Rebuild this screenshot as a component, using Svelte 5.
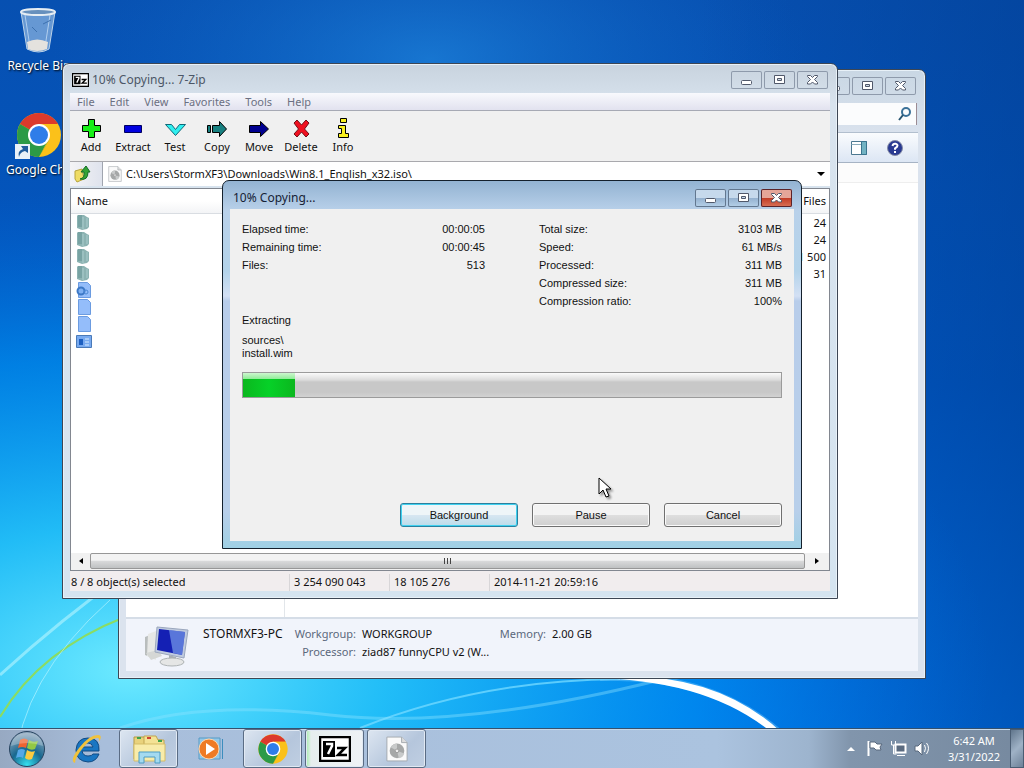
<script lang="ts">
	type IconName = 'folder' | 'setup' | 'file' | 'exe';

	const menus = ['File', 'Edit', 'View', 'Favorites', 'Tools', 'Help'];
	const tools = ['Add', 'Extract', 'Test', 'Copy', 'Move', 'Delete', 'Info'];

	const entries: { icon: IconName; files: string }[] = [
		{ icon: 'folder', files: '24' },
		{ icon: 'folder', files: '24' },
		{ icon: 'folder', files: '1 500' },
		{ icon: 'folder', files: '31' },
		{ icon: 'setup', files: '' },
		{ icon: 'file', files: '' },
		{ icon: 'file', files: '' },
		{ icon: 'exe', files: '' }
	];

	const timing = [
		['Elapsed time:', '00:00:05'],
		['Remaining time:', '00:00:45'],
		['Files:', '513']
	];

	const sizes = [
		['Total size:', '3103 MB'],
		['Speed:', '61 MB/s'],
		['Processed:', '311 MB'],
		['Compressed size:', '311 MB'],
		['Compression ratio:', '100%']
	];

	let path = $state('C:\\Users\\StormXF3\\Downloads\\Win8.1_English_x32.iso\\');
	let search = $state('');
	let progress = $state(9.7);
</script>

{#snippet caption()}
	<div class="caption">
		<button aria-label="Minimize">
			<svg width="31" height="18" viewBox="0 0 31 18"
				><rect x="10.5" y="9.5" width="10" height="4" rx="1" fill="#fff" stroke="#50586a" /></svg
			>
		</button>
		<button aria-label="Maximize">
			<svg width="31" height="18" viewBox="0 0 31 18"
				><path
					d="M10.5 4.5h10v8h-10zM13.5 7.5v2h4v-2z"
					fill="#fff"
					fill-rule="evenodd"
					stroke="#50586a"
				/></svg
			>
		</button>
		<button class="close" aria-label="Close">
			<svg width="31" height="18" viewBox="0 0 31 18"
				><path
					d="M10.5 4.5h3l2 2 2-2h3v1l-3 3 3 3v1.500h-3l-2-2-2 2h-3v-1.500l3-3-3-3z"
					fill="#fff"
					stroke="#50586a"
				/></svg
			>
		</button>
	</div>
{/snippet}

{#snippet sevenZip(width: number, height: number)}
	<svg {width} {height} viewBox="0 0 32 26" aria-hidden="true">
		<rect x="1" y="1" width="30" height="24" fill="#fff" stroke="#000" stroke-width="2.5" />
		<rect x="4" y="5" width="12" height="16" />
		<path d="M7 8h6v2l-4 8" fill="none" stroke="#fff" stroke-width="2.5" />
		<path d="M18 12h8l-7 7h9" fill="none" stroke="#000" stroke-width="2.5" />
	</svg>
{/snippet}

{#snippet chrome(size: number)}
	<svg width={size} height={size} viewBox="0 0 48 48" aria-hidden="true">
		<circle cx="24" cy="24" r="22" fill="#fbc11a" />
		<path d="M24 24 5 13A22 22 0 0 1 43 13H24z" fill="#dc3a2c" />
		<path d="M5 13A22 22 0 0 0 24 46l10-17-10-5z" fill="#2c9a47" />
		<path d="M24 13h19L34 29 24 46l9-17z" fill="#fbc11a" />
		<circle cx="24" cy="24" r="11" fill="#fff" />
		<circle cx="24" cy="24" r="9" fill="#2f7de9" />
	</svg>
{/snippet}

{#snippet disc(width: number, height: number)}
	<svg {width} {height} viewBox="0 0 24 28" aria-hidden="true">
		<path d="M1 1h16l6 6v20H1z" fill="#fafafa" stroke="#a2a7ad" />
		<path d="M17 1v6h6" fill="#ddd" stroke="#a2a7ad" />
		<circle cx="12" cy="16" r="8" fill="#a6a8a8" />
		<path d="m12 16-7-4q3-4 7-4zM12 16l8 3q-2 5-6 5z" fill="#c8caca" />
		<circle cx="12" cy="16" r="2" fill="#eee" stroke="#999" />
	</svg>
{/snippet}

{#snippet toolIcon(name: string)}
	<svg width="22" height="22" viewBox="0 0 22 22" stroke="#000" aria-hidden="true">
		{#if name === 'Add'}
			<path d="M8.500 2.500h6v6h6v6h-6v6h-6v-6h-6v-6h6z" fill="#18f018" />
		{:else if name === 'Extract'}
			<path d="M2.500 8.500h17v7h-17z" fill="#0000e0" stroke="#000060" />
		{:else if name === 'Test'}
			<path d="M1.500 7.500h6l4 5 4-5h6l-10 11z" fill="#30f0f0" stroke="#106878" />
		{:else if name === 'Copy'}
			<path d="M1.500 8.500h3v7h-3zM6.500 8.500h7v-4l7 7.500-7 7.500v-4h-7z" fill="#188080" />
		{:else if name === 'Move'}
			<path d="M1.500 8.500h11v-4l8 7.500-8 7.500v-4h-11z" fill="#000090" />
		{:else if name === 'Delete'}
			<path
				d="m4 6 3-3 4.500 5L16 3l3 3-4.500 6 4.500 5-3 3-4.500-5L7 20l-3-3 4.500-5z"
				fill="#f01020"
				stroke="#701018"
			/>
		{:else}
			<path d="M8.500 1.500h6v4h-6zM6.500 8.500h7v8h3v4h-10v-4h3v-5h-3z" fill="#f8f020" />
		{/if}
	</svg>
{/snippet}

{#snippet fileIcon(name: IconName)}
	<svg width="16" height="16" viewBox="0 0 16 16" aria-hidden="true">
		{#if name === 'folder'}
			<path d="M1 2q0-1 2-1h5l3 2 2 1v9l-2 2-5 1-5-2z" fill="#8cb3b2" />
			<path d="M2 1h4v12H2z" fill="#78a3a3" />
			<path d="M7 3v12M11 4v9" stroke="#aacdce" />
		{:else if name === 'exe'}
			<path d="M.5 2.500h15v12H.500z" fill="#78aaf0" stroke="#4a7ab8" />
			<path d="M3 6h4v6H3z" fill="#1d5fc0" />
			<path d="M9 6h4M9 9h4M9 12h4" stroke="#d8ecff" />
		{:else}
			<path d="M2.500.5h9l3 3v12h-12z" fill="#94bdfa" stroke="#6b9be0" />
			{#if name === 'setup'}
				<circle cx="5" cy="9" r="3.500" fill="#7fb0f2" stroke="#3c78c6" stroke-width="2" />
				<circle cx="10" cy="10" r="2" fill="none" stroke="#4b88d4" />
			{/if}
		{/if}
	</svg>
{/snippet}

<div class="screen">
	<svg class="wallpaper" viewBox="0 0 1024 768" preserveAspectRatio="none" aria-hidden="true">
		<defs>
			<radialGradient id="glow">
				<stop offset="0" stop-color="#6deaff" />
				<stop offset="0.3" stop-color="#25c6fa" stop-opacity="0.9" />
				<stop offset="0.65" stop-color="#0095f4" stop-opacity="0.65" />
				<stop offset="1" stop-color="#0070e0" stop-opacity="0" />
			</radialGradient>
			<linearGradient id="sky" x1="0" y1="0" x2="0" y2="1">
				<stop offset="0" stop-color="#0750b1" />
				<stop offset="0.5" stop-color="#0058c4" />
				<stop offset="1" stop-color="#0074ea" />
			</linearGradient>
			<radialGradient id="light">
				<stop offset="0" stop-color="#238ee4" stop-opacity="0.6" />
				<stop offset="1" stop-color="#1068c8" stop-opacity="0" />
			</radialGradient>
			<linearGradient id="shade">
				<stop offset="0" stop-color="#003c90" stop-opacity="0" />
				<stop offset="1" stop-color="#003c90" stop-opacity="0.5" />
			</linearGradient>
		</defs>
		<rect width="1024" height="768" fill="url(#sky)" />
		<ellipse cx="430" cy="60" rx="380" ry="190" fill="url(#light)" />
		<rect x="700" width="324" height="768" fill="url(#shade)" />
		<ellipse cx="130" cy="670" rx="860" ry="480" fill="url(#glow)" />
		<g fill="none">
			<path d="M0 675Q60 620 130 570" stroke="#b7f5ff" stroke-width="3" opacity="0.6" />
			<path d="M0 717Q40 650 125 617" stroke="#8bdc62" stroke-width="2" />
			<path d="M15 768Q20 680 110 600" stroke="#c1f7ff" opacity="0.6" />
			<path d="M360 728Q480 680 620 679" stroke="#70d8ff" stroke-width="2" opacity="0.8" />
			<path d="M120 728Q200 700 330 715T660 680" stroke="#8fe4ff" stroke-width="3" opacity="0.4" />
			<path d="M600 677Q710 674 778 732" stroke="#7ccfff" stroke-width="8" opacity="0.4" />
		</g>
		<path d="M590 678Q710 666 781 732h-10Q706 679 590 678" fill="#fff" />
	</svg>

	<main class="desktop">
		<div class="shortcuts">
			<button class="shortcut">
				<svg width="48" height="48" viewBox="0 0 48 48" aria-hidden="true">
					<path d="m6 5 6 37q12 6 22 0l6-37z" fill="#a6c8ea" fill-opacity="0.6" stroke="#bdd3e8" />
					<path d="M10 8l5 32M35 8l-5 32" stroke="#e4f3ff" opacity="0.6" />
					<path d="m12 35q10-5 21 0l-1 7q-10 4-19 0z" fill="#e4e2de" />
					<path d="M28 17l8-4M17 20l5 5" stroke="#3d71af" />
					<ellipse cx="23" cy="5" rx="17" ry="3" fill="#6790bd" stroke="#e6edf3" stroke-width="2" />
				</svg>
				<span>Recycle Bin</span>
			</button>
			<button class="shortcut">
				<span class="linked">
					{@render chrome(48)}
					<svg class="link-arrow" width="15" height="15" viewBox="0 0 15 15">
						<path d="M0 0h15v15H0z" fill="#e9f1f8" />
						<path d="M4 13q-2-6 4-8L6 2h7v7l-3-2q-5 1-6 6" fill="#205c9c" />
					</svg>
				</span>
				<span>Google Chrome</span>
			</button>
		</div>

		<section class="window computer" aria-label="Computer">
			<header class="titlebar">{@render caption()}</header>
			<div class="searchbar">
				<label class="search">
					<input aria-label="Search Computer" bind:value={search} />
					<svg width="14" height="14" viewBox="0 0 14 14" fill="none" aria-hidden="true">
						<circle cx="8" cy="5" r="4" stroke="#3a7198" stroke-width="2" />
						<path d="M5 8 1 13" stroke="#26536f" stroke-width="2" />
					</svg>
				</label>
			</div>
			<div class="commandbar">
				<button aria-label="Show the preview pane">
					<svg width="16" height="14" viewBox="0 0 16 14">
						<path d="M.5.5h15v13H.5z" fill="#fff" stroke="#4c7890" />
						<path d="M.5 3.500h10" stroke="#8cacbb" />
						<path d="M10.500.5h5v13h-5z" fill="#72b3c3" stroke="#39748e" />
					</svg>
				</button>
				<button aria-label="Help">
					<svg width="16" height="16" viewBox="0 0 16 16">
						<circle cx="8" cy="8" r="7.500" fill="#293a91" stroke="#868da8" />
						<path
							d="M5.500 6Q6 3.500 8.500 3.800q3 .7 1.500 3L8 8.500v1.300M8 11v2"
							fill="none"
							stroke="#fff"
							stroke-width="2"
						/>
					</svg>
				</button>
			</div>
			<div class="drives"><div class="tree"></div></div>
			<footer class="details">
				<svg width="48" height="44" viewBox="0 0 48 44" aria-hidden="true">
					<path d="m2 12 10-4v26l-10-4z" fill="#b9bdbd" />
					<path d="m5 9 8-3v29l-9-4z" fill="#e7e8e6" />
					<path d="m3 28 12-3 4 6-11 4z" fill="#d5d7d5" />
					<path d="m14 2 31 3-4 28-29-6z" fill="#c0cbdf" stroke="#9ba7bd" />
					<path d="m16 4 26 3-3 23-25-5z" fill="#1420b4" />
					<path d="m26 5 16 2-3 23-9-2z" fill="#7ea4ee" opacity="0.65" />
					<path d="m26 30 7 2v6h-7z" fill="#a9afb4" />
					<ellipse cx="29" cy="37" rx="12" ry="4" fill="#e5e6e5" stroke="#aeb3b4" />
				</svg>
				<strong>STORMXF3-PC</strong>
				<dl class="properties">
					<dt>Workgroup:</dt>
					<dd>WORKGROUP</dd>
					<dt>Processor:</dt>
					<dd>ziad87 funnyCPU v2 (W...</dd>
				</dl>
				<dl class="properties memory">
					<dt>Memory:</dt>
					<dd>2.00 GB</dd>
				</dl>
			</footer>
		</section>

		<section class="window archiver" aria-label="7-Zip">
			<header class="titlebar">
				{@render sevenZip(17, 14)}
				<h1>10% Copying... 7-Zip</h1>
				{@render caption()}
			</header>
			<nav class="menubar">
				{#each menus as menu}
					<button>{menu}</button>
				{/each}
			</nav>
			<div class="toolbar">
				{#each tools as tool}
					<button>
						{@render toolIcon(tool)}
						<span>{tool}</span>
					</button>
				{/each}
			</div>
			<div class="addressbar">
				<button class="up" aria-label="Up one level">
					<svg width="18" height="18" viewBox="0 0 18 18">
						<path d="m1 6 7-2 2 10-7 3-2-3z" fill="#efdc65" stroke="#b7a43c" />
						<path d="M6 14q5-1 4-7H7l5-6 4 6h-2q0 9-8 7" fill="#33a336" stroke="#146d24" />
					</svg>
				</button>
				<div class="path">
					{@render disc(14, 16)}
					<input aria-label="Path" bind:value={path} />
					<button aria-label="Show path list">
						<svg width="8" height="5" viewBox="0 0 8 5"><path d="M0 0h8L4 4z" /></svg>
					</button>
				</div>
			</div>
			<div class="listing">
				<table>
					<thead>
						<tr><th>Name</th><th>Files</th></tr>
					</thead>
					<tbody>
						{#each entries as entry}
							<tr>
								<td>{@render fileIcon(entry.icon)}</td>
								<td>{entry.files}</td>
							</tr>
						{/each}
					</tbody>
				</table>
				<div class="scrollbar">
					<button aria-label="Scroll left">
						<svg width="4" height="6" viewBox="0 0 4 6"><path d="M4 0v6L0 3z" /></svg>
					</button>
					<div class="thumb"><i></i><i></i><i></i></div>
					<button aria-label="Scroll right">
						<svg width="4" height="6" viewBox="0 0 4 6"><path d="M0 0v6l4-3z" /></svg>
					</button>
				</div>
			</div>
			<footer class="statusbar">
				<span>8 / 8 object(s) selected</span>
				<span>3 254 090 043</span>
				<span>18 105 276</span>
				<span>2014-11-21 20:59:16</span>
			</footer>
		</section>

		<div class="window dialog" role="dialog" aria-label="10% Copying...">
			<header class="titlebar">
				<h2>10% Copying...</h2>
				{@render caption()}
			</header>
			<div class="dialog-body">
				<div class="stats">
					<dl>
						{#each timing as [label, value]}
							<div><dt>{label}</dt><dd>{value}</dd></div>
						{/each}
					</dl>
					<dl>
						{#each sizes as [label, value]}
							<div><dt>{label}</dt><dd>{value}</dd></div>
						{/each}
					</dl>
				</div>
				<p class="action">Extracting</p>
				<p class="current">sources\<br />install.wim</p>
				<progress max="100" value={progress} aria-label="Copying"></progress>
				<div class="actions">
					<button class="default">Background</button>
					<button>Pause</button>
					<button>Cancel</button>
				</div>
			</div>
		</div>

		<svg class="cursor" width="14" height="22" viewBox="0 0 14 22" aria-hidden="true">
			<path d="M1 1v16l4-4 3 7 3-1-3-7h5z" fill="#fff" stroke="#000" />
		</svg>
	</main>

	<footer class="taskbar">
		<button class="start" aria-label="Start">
			<svg width="38" height="38" viewBox="0 0 38 38">
				<defs>
					<radialGradient id="orb" cx="0.5" cy="0.95" r="0.9">
						<stop offset="0" stop-color="#35e0ef" />
						<stop offset="0.5" stop-color="#18688f" />
						<stop offset="1" stop-color="#8ca6bd" />
					</radialGradient>
				</defs>
				<circle cx="19" cy="19" r="17.5" fill="url(#orb)" stroke="#27435f" />
				<path d="M12 10q4-3 8 0l-2 8q-4-2-8 0z" fill="#ee6331" />
				<path d="M21 10q4 3 9 1l-3 8q-4 2-8-1z" fill="#92c845" />
				<path d="M10 20q4-2 7 0l-2 8q-3-2-7 0z" fill="#55a8e8" />
				<path d="M19 20q4 3 8 1l-3 8q-4 2-7-1z" fill="#fbcb40" />
				<path d="M3 16Q5 3 19 3t16 13Q19 10 3 16" fill="#fff" opacity="0.25" />
			</svg>
		</button>
		<button class="task" aria-label="Internet Explorer">
			<svg width="34" height="34" viewBox="0 0 34 34">
				<path
					d="M29 19H12q1 5 6 5 4 0 5-2h6q-3 8-11 8Q6 29 6 18 7 6 18 6q12 0 11 13M12 15h11q-1-4-5-4-5 0-6 4"
					fill="#1976c2"
					stroke="#104a83"
				/>
				<path d="M5 31q-6-2 4-15T28 3q5 0 1 7 1-5-3-4-7 2-14 11T5 31" fill="#f1c23b" />
			</svg>
		</button>
		<button class="task open" aria-label="Windows Explorer">
			<svg width="34" height="32" viewBox="0 0 34 32">
				<path d="M2 4h10l2 3h16v19H2z" fill="#e9d27c" stroke="#b59a45" />
				<path d="M12 3h12l2 4h6v18H12z" fill="#f4e294" stroke="#c0a550" />
				<path d="M2 11h31v17H2z" fill="#f8ecaa" stroke="#d5bd67" />
				<path d="M5 5h4M26 8h4" stroke="#3fa34a" stroke-width="2" />
				<path d="M15 5h4" stroke="#cf4433" stroke-width="2" />
				<path d="M7 30V19h21v11h-5v-6H12v6z" fill="#a4daf0" stroke="#4c9cc4" />
			</svg>
		</button>
		<button class="task" aria-label="Windows Media Player">
			<svg width="28" height="28" viewBox="0 0 28 28">
				<path d="M2 3h21v21H2z" fill="#94c8e8" stroke="#579ac4" />
				<path d="M25.500 4v20" stroke="#3c8dbd" />
				<circle cx="12" cy="14" r="10" fill="#ee7b25" stroke="#ffd7ad" />
				<path d="m9 8 9 6-9 6z" fill="#fff" />
			</svg>
		</button>
		<button class="task open" aria-label="Google Chrome">{@render chrome(32)}</button>
		<button class="task open busy" aria-label="7-Zip">{@render sevenZip(32, 26)}</button>
		<button class="task open" aria-label="Disc image">{@render disc(22, 26)}</button>

		<div class="tray">
			<div class="tray-icons">
				<button aria-label="Show hidden icons">
					<svg width="8" height="5" viewBox="0 0 8 5"><path d="M0 5l4-4 4 4z" fill="#fff" /></svg>
				</button>
				<button aria-label="Action Center">
					<svg width="17" height="17" viewBox="0 0 17 17">
						<path d="M2.500 1v15" stroke="#fff" stroke-width="2" />
						<path d="M4 2h5l2 2h5l-2 3 1 3h-5L8 8H4z" fill="#fff" stroke="#59687d" />
					</svg>
				</button>
				<button aria-label="Network">
					<svg width="17" height="17" viewBox="0 0 17 17" fill="none" stroke="#fff">
						<path d="M5.500 4.500h10v8h-10z" fill="#5b6b80" stroke-width="2" />
						<path d="M7 15.500h8M1.500 1v4h4V1M3.500 5v9h3" />
					</svg>
				</button>
				<button aria-label="Volume">
					<svg width="17" height="17" viewBox="0 0 17 17" fill="none" stroke="#fff">
						<path d="M1 6h3l4-4v13l-4-4H1z" fill="#fff" stroke="#59687d" />
						<path d="M10.500 5q2 3 0 7M12.500 3q4 5 0 11" />
					</svg>
				</button>
			</div>
			<time datetime="2022-03-31T06:42"><span>6:42 AM</span><span>3/31/2022</span></time>
			<button class="show-desktop" aria-label="Show desktop"></button>
		</div>
	</footer>
</div>

<style>
	:global(body) {
		margin: 0;
	}

	.screen {
		position: relative;
		display: flex;
		flex-direction: column;
		height: 100vh;
		overflow: hidden;
		font-family: 'Noto Sans', 'Open Sans', sans-serif;
		font-size: 11px;
		line-height: 16px;
		color: #111;
	}

	.screen * {
		box-sizing: border-box;
	}

	button,
	input {
		padding: 0;
		border: none;
		background: none;
		font: inherit;
		color: inherit;
	}

	svg {
		display: block;
		flex-shrink: 0;
	}

	dl,
	dd,
	p,
	h1,
	h2 {
		margin: 0;
		font-size: inherit;
		font-weight: normal;
	}

	.wallpaper {
		position: absolute;
		inset: 0;
		width: 100%;
		height: 100%;
	}

	.desktop {
		position: relative;
		flex: 1;
		min-height: 0;
	}

	/* Desktop shortcuts */
	.shortcuts {
		display: flex;
		flex-direction: column;
		gap: 37px;
		width: 78px;
		padding-top: 7px;
	}

	.shortcut {
		display: flex;
		flex-direction: column;
		align-items: center;
		gap: 3px;
		color: #fff;
		font-size: 12px;
		text-shadow: 1px 1px 2px #000;
		white-space: nowrap;
	}

	.shortcut > span:last-child {
		max-width: 66px;
	}

	.linked {
		position: relative;
	}

	.link-arrow {
		position: absolute;
		left: 0;
		bottom: 0;
	}

	/* Windows */
	.window {
		position: absolute;
		display: flex;
		flex-direction: column;
		padding: 0 7px 7px;
		border: 1px solid #3d4654;
		border-radius: 7px 7px 0 0;
		background: #d5e1ec;
		box-shadow: inset 0 0 0 1px #e8f1f8;
	}

	.titlebar {
		display: flex;
		align-items: center;
		gap: 3px;
		flex-shrink: 0;
		height: 29px;
		padding: 3px 2px 0 2px;
		font-size: 12px;
	}

	.caption {
		display: flex;
		gap: 2px;
		margin-left: auto;
	}

	.caption button {
		width: 31px;
		height: 18px;
		border-radius: 2px;
		box-shadow: inset 0 0 0 1px #8e9aab;
	}

	/* Computer */
	.computer {
		inset: 69px 98px 49px 118px;
		background: linear-gradient(#c9d7e4, #dbe3ee 70px);
	}

	.searchbar {
		display: flex;
		justify-content: flex-end;
		padding: 4px 1px 7px 0;
	}

	.search {
		display: flex;
		align-items: center;
		width: 180px;
		height: 22px;
		padding-right: 4px;
		border-right: 1px solid #9b8b93;
		background: #fbfcfd;
	}

	.search input {
		flex: 1;
		min-width: 0;
		outline: none;
	}

	.commandbar {
		display: flex;
		align-items: center;
		justify-content: flex-end;
		gap: 20px;
		height: 31px;
		padding-right: 15px;
		border-top: 1px solid #b2bfce;
		border-bottom: 1px solid #a6b3c4;
		background: linear-gradient(#fafcfe, #dce6f4);
	}

	.drives {
		display: flex;
		flex: 1;
		background: linear-gradient(#fcfcfc 19px, #eee 19px, #eee 20px, #fff 20px);
	}

	.tree {
		width: 159px;
		border-right: 1px solid #e2e6ea;
	}

	.details {
		display: flex;
		align-items: flex-start;
		height: 54px;
		padding: 6px 14px 0 17px;
		border-top: 2px solid #d5dde7;
		background: #f1f4fb;
		line-height: 18px;
		white-space: nowrap;
	}

	.details strong {
		width: 85px;
		margin-left: 12px;
		font-size: 12px;
		font-weight: normal;
	}

	.properties {
		display: grid;
		grid-template-columns: 68px 137px;
		column-gap: 6px;
	}

	.properties dt {
		text-align: right;
		color: #5b687c;
	}

	.memory {
		grid-template-columns: 47px auto;
	}

	/* 7-Zip */
	.archiver {
		inset: 63px 186px 129px 62px;
		background: linear-gradient(#c8d3de, #d8e3ee 40px, #d5e4f0);
	}

	.archiver h1 {
		color: #4c5767;
	}

	.menubar {
		display: flex;
		gap: 15px;
		height: 18px;
		padding-left: 7px;
		border-bottom: 1px solid #a6a9b4;
		background: linear-gradient(#f8f9fd, #e2e2ef);
		color: #6c7082;
	}

	.toolbar {
		display: flex;
		height: 51px;
		padding-top: 6px;
		border-bottom: 1px solid #a9a9ad;
		background: #f0f0f0;
	}

	.toolbar button {
		display: flex;
		flex-direction: column;
		align-items: center;
		width: 42px;
	}

	.addressbar {
		display: flex;
		height: 24px;
		background: #fff;
	}

	.up {
		width: 33px;
		padding-left: 4px;
		border-right: 1px solid #a0a5af;
		background: linear-gradient(90deg, #f4f4f6, #dfe3ed);
	}

	.path {
		display: flex;
		align-items: center;
		gap: 4px;
		flex: 1;
		padding: 0 5px;
	}

	.path input {
		flex: 1;
		min-width: 0;
		outline: none;
	}

	.listing {
		display: flex;
		flex-direction: column;
		flex: 1;
		min-height: 0;
		margin-top: 2px;
		border: 1px solid #828790;
		background: #fff;
	}

	table {
		width: 100%;
		border-collapse: collapse;
		line-height: 17px;
	}

	th {
		height: 24px;
		padding: 0 3px 0 6px;
		border-bottom: 1px solid #d9dde2;
		background: linear-gradient(#fff 50%, #f3f4f6);
		font-weight: normal;
		text-align: left;
	}

	td {
		height: 17px;
		padding: 0 3px 0 5px;
	}

	th:last-child,
	td:last-child {
		text-align: right;
	}

	.scrollbar {
		display: flex;
		height: 17px;
		margin-top: auto;
		padding-bottom: 1px;
		background: #f1f1f1;
	}

	.scrollbar button {
		display: grid;
		place-items: center;
		width: 19px;
	}

	.scrollbar button:last-child {
		width: 24px;
	}

	.thumb {
		display: flex;
		justify-content: center;
		gap: 2px;
		flex: 1;
		padding-top: 4px;
		border: 1px solid #979797;
		border-radius: 2px;
		background: linear-gradient(#f3f3f3 45%, #d9dadb 50%, #bfc1c2);
	}

	.thumb i {
		width: 1px;
		height: 6px;
		background: #444;
	}

	.statusbar {
		display: grid;
		grid-template-columns: 219px 100px 100px 1fr;
		height: 20px;
		padding-top: 3px;
		background: #f1edee;
		white-space: nowrap;
	}

	.statusbar span {
		padding-left: 4px;
		border-left: 1px solid #d8d6d8;
	}

	.statusbar span:first-child {
		padding-left: 1px;
		border: none;
	}

	/* Copy progress */
	.dialog {
		inset: 180px 222px 179px 222px;
		border-color: #14202c;
		background: linear-gradient(
			#93b3d2,
			#b9d1ea 30px,
			#b3d3ea 90px,
			#d3e0f4 115px,
			#b8cdea 120px,
			#b8cfea 90%,
			#9fd0e4
		);
		box-shadow: none;
	}

	.dialog .titlebar {
		height: 28px;
		padding: 6px 2px 0 3px;
		color: #162235;
	}

	.dialog .caption button {
		background: linear-gradient(#c6d9ec 50%, #94b1cf 50%, #b6d1e9);
		box-shadow: inset 0 0 0 1px #62778f;
	}

	.dialog .caption .close {
		background: linear-gradient(#e5a598 50%, #c13a25 50%, #d97459);
		box-shadow: inset 0 0 0 1px #5b2329;
	}

	.dialog-body {
		display: flex;
		flex-direction: column;
		flex: 1;
		padding: 11px 12px 14px 12px;
		background: #f0f0f0;
		font-family: 'Liberation Sans', Arial, sans-serif;
	}

	.stats {
		display: grid;
		grid-template-columns: 1fr 1fr;
		gap: 54px;
		line-height: 18px;
	}

	.stats div {
		display: flex;
		justify-content: space-between;
	}

	.action {
		margin-top: 2px;
	}

	.current {
		margin-top: 6px;
		line-height: 13px;
	}

	progress {
		appearance: none;
		width: 100%;
		height: 26px;
		margin-top: 12px;
		border: 1px solid #9b9b9b;
	}

	progress::-webkit-progress-bar {
		background: linear-gradient(#fafafa, #dcdcdc 7px, #c8c8c8 9px, #c8c8c8 80%, #d2d2d2);
	}

	progress::-webkit-progress-value {
		background:
			linear-gradient(#cdf7cf, #90ec98 6px, transparent 6px),
			linear-gradient(90deg, #0bb71e, #06d128 50%, #0bb71e);
	}

	.actions {
		display: flex;
		justify-content: flex-end;
		gap: 14px;
		margin-top: auto;
	}

	.actions button {
		width: 118px;
		height: 24px;
		border: 1px solid #707070;
		border-radius: 3px;
		background: linear-gradient(#f3f3f3 48%, #dedede 52%, #cfcfcf);
		box-shadow: inset 0 0 0 1px #fafafa;
	}

	.actions .default {
		border-color: #2b809e;
		background: linear-gradient(#eef5f8 48%, #d6e6f1 52%, #bcdcea);
		box-shadow: inset 0 0 0 1px #3fd1f0;
	}

	.cursor {
		position: absolute;
		left: 598px;
		top: 477px;
		filter: drop-shadow(2px 2px 1px #0006);
	}

	/* Taskbar */
	.taskbar {
		position: relative;
		display: flex;
		flex-shrink: 0;
		gap: 3px;
		height: 40px;
		border-top: 1px solid #35516e;
		background: linear-gradient(90deg, #97a9c2, #a8bedb 10%, #abc3df 70%, #9db4ce 79%, #8195ac 83%, #76899f);
		box-shadow: inset 0 1px 0 #c5d8ea;
	}

	.start {
		display: grid;
		place-items: center;
		width: 54px;
	}

	.task {
		display: grid;
		place-items: center;
		width: 59px;
	}

	.open {
		border: 1px solid #5a6c84;
		border-radius: 3px;
		background: linear-gradient(135deg, #dde6f1, #b5c6dc 60%, #c0cfe2);
		box-shadow: inset 0 0 0 1px #e1e9f3;
	}

	.busy {
		background: linear-gradient(90deg, #a5eeaa, #e6eeee 5px, #eef2f6);
	}

	.tray {
		display: flex;
		align-items: center;
		margin-left: auto;
		color: #fff;
	}

	.tray-icons {
		display: flex;
		align-items: center;
		gap: 7px;
		margin-right: 7px;
	}

	.tray-icons button:first-child {
		margin-right: 4px;
	}

	time {
		display: flex;
		flex-direction: column;
		align-items: center;
		width: 72px;
	}

	.show-desktop {
		align-self: stretch;
		width: 14px;
		border: 1px solid #4a5d73;
		background: linear-gradient(135deg, #60758c, #9fb2c6 50%, #6d8198);
	}
</style>
